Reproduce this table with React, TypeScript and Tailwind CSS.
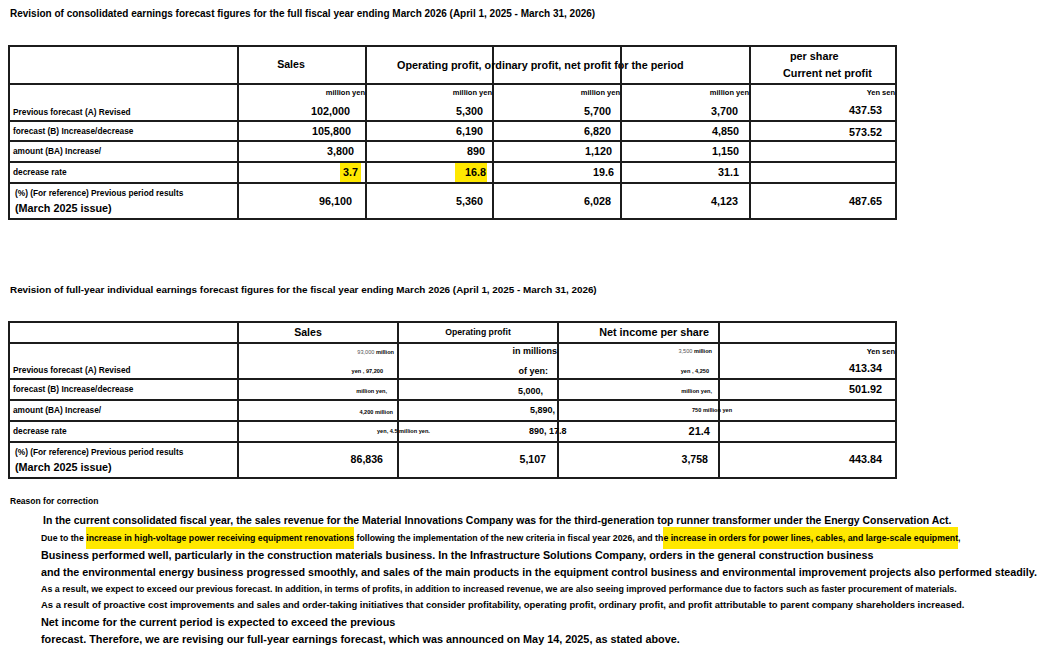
import React from "react";

type CellProps = { className?: string; children?: React.ReactNode };

// cells carry the right and bottom rule; the grid itself carries the top and left one
function Cell({ className = "", children }: CellProps) {
  return (
    <div className={"flex whitespace-nowrap border-r-2 border-b-2 border-[#1c1c1c] " + className}>
      {children}
    </div>
  );
}

function Label({ children }: { children: React.ReactNode }) {
  return <Cell className="items-center pl-[3px] text-[8.3px]">{children}</Cell>;
}

function Hl({ children, className = "" }: { children: React.ReactNode; className?: string }) {
  return <span className={"bg-[#ffe800] flex items-center " + className}>{children}</span>;
}

function ReferenceLabel() {
  return (
    <Cell className="flex-col justify-center pl-[5px]">
      <span className="text-[8.3px] leading-[14px]">(%) (For reference) Previous period results</span>
      <span className="text-[10.8px] leading-[16px]">(March 2025 issue)</span>
    </Cell>
  );
}

function ConsolidatedTable() {
  return (
    <div className="ml-[8px] mt-[25px] w-[889px] grid grid-cols-[229px_128px_127px_128px_129px_146px] grid-rows-[38px_37px_20px_21px_21px_36px] border-t-2 border-l-2 border-[#1c1c1c]">
      {/* header */}
      <Cell />
      <Cell className="items-center justify-center pr-[22px] text-[10.6px]">Sales</Cell>
      <Cell className="items-center pl-[30px] text-[10.8px]">Operating profit, ordinary profit, net profit for the period</Cell>
      <Cell />
      <Cell />
      <Cell className="flex-col justify-center text-[10.8px] leading-[17px]">
        <span className="pl-[39px]">per share</span>
        <span className="pl-[32px]">Current net profit</span>
      </Cell>

      {/* row 1 */}
      <Cell className="items-end pl-[3px] pb-[2px] text-[8.3px]">Previous forecast (A) Revised</Cell>
      <Cell className="flex-col items-end justify-between pt-[3px] pb-[2px]">
        <span className="text-[7.5px] leading-[9px]">million yen</span>
        <span className="text-[10.8px] leading-[13px] pr-[15px]">102,000</span>
      </Cell>
      <Cell className="flex-col items-end justify-between pt-[3px] pb-[2px]">
        <span className="text-[7.5px] leading-[9px]">million yen</span>
        <span className="text-[10.8px] leading-[13px] pr-[9px]">5,300</span>
      </Cell>
      <Cell className="flex-col items-end justify-between pt-[3px] pb-[2px]">
        <span className="text-[7.5px] leading-[9px]">million yen</span>
        <span className="text-[10.8px] leading-[13px] pr-[9px]">5,700</span>
      </Cell>
      <Cell className="flex-col items-end justify-between pt-[3px] pb-[2px]">
        <span className="text-[7.5px] leading-[9px]">million yen</span>
        <span className="text-[10.8px] leading-[13px] pr-[11px]">3,700</span>
      </Cell>
      <Cell className="flex-col items-end justify-between pt-[3px] pb-[3px]">
        <span className="text-[7.5px] leading-[9px]">Yen sen</span>
        <span className="text-[10.8px] leading-[13px] pr-[13px]">437.53</span>
      </Cell>

      {/* row 2 */}
      <Label>forecast (B) Increase/decrease</Label>
      <Cell className="items-center justify-end pr-[14px] text-[10.8px]">105,800</Cell>
      <Cell className="items-center justify-end pr-[9px] text-[10.8px]">6,190</Cell>
      <Cell className="items-center justify-end pr-[9px] text-[10.8px]">6,820</Cell>
      <Cell className="items-center justify-end pr-[10px] text-[10.8px]">4,850</Cell>
      <Cell className="items-start pt-[2px] justify-end pr-[13px] text-[10.8px]">573.52</Cell>

      {/* row 3 */}
      <Label>amount (BA) Increase/</Label>
      <Cell className="items-center justify-end pr-[11px] text-[10.8px]">3,800</Cell>
      <Cell className="items-center justify-end pr-[7px] text-[10.8px]">890</Cell>
      <Cell className="items-center justify-end pr-[8px] text-[10.8px]">1,120</Cell>
      <Cell className="items-center justify-end pr-[10px] text-[10.8px]">1,150</Cell>
      <Cell />

      {/* row 4 */}
      <Label>decrease rate</Label>
      <Cell className="justify-end pr-[4px] text-[10.8px]">
        <Hl className="px-[3px]">3.7</Hl>
      </Cell>
      <Cell className="justify-end pr-[5px] text-[10.8px]">
        <Hl className="pl-[10px] pr-[1px]">16.8</Hl>
      </Cell>
      <Cell className="items-center justify-end pr-[6px] text-[10.8px]">19.6</Cell>
      <Cell className="items-center justify-end pr-[10px] text-[10.8px]">31.1</Cell>
      <Cell />

      {/* row 5 */}
      <ReferenceLabel />
      <Cell className="items-center justify-end pr-[13px] text-[10.8px]">96,100</Cell>
      <Cell className="items-center justify-end pr-[9px] text-[10.8px]">5,360</Cell>
      <Cell className="items-center justify-end pr-[9px] text-[10.8px]">6,028</Cell>
      <Cell className="items-center justify-end pr-[11px] text-[10.8px]">4,123</Cell>
      <Cell className="items-center justify-end pr-[13px] text-[10.8px]">487.65</Cell>
    </div>
  );
}

function IndividualTable() {
  return (
    <div className="ml-[8px] mt-[25px] w-[889px] grid grid-cols-[229px_160px_160px_161px_177px] grid-rows-[21px_36px_21px_21px_21px_36px] border-t-2 border-l-2 border-[#1c1c1c]">
      {/* header */}
      <Cell />
      <Cell className="items-center justify-center pr-[20px] text-[10.6px]">Sales</Cell>
      <Cell className="items-center justify-center text-[8.7px]">Operating profit</Cell>
      <Cell className="items-center justify-end pr-[9px] text-[10.8px]">Net income per share</Cell>
      <Cell />

      {/* row 1 */}
      <Cell className="items-end pl-[3px] pb-[2px] text-[8.3px]">Previous forecast (A) Revised</Cell>
      <Cell className="flex-col items-end justify-between pt-[4px] pb-[3px] text-[5.6px] leading-[8px]">
        <span className="pr-[3px]"><span className="font-normal text-[#555]">93,000</span> million</span>
        <span className="pr-[14px]">yen , 97,200</span>
      </Cell>
      <Cell className="flex-col items-end justify-between pt-[1px] pb-[1px] text-[9px] leading-[12px]">
        <span>in millions</span>
        <span className="pr-[9px]">of yen:</span>
      </Cell>
      <Cell className="flex-col items-end justify-between pt-[3px] pb-[3px] text-[5.6px] leading-[8px]">
        <span className="pr-[6px]"><span className="font-normal text-[#555]">3,500</span> million</span>
        <span className="pr-[9px]">yen , 4,250</span>
      </Cell>
      <Cell className="flex-col items-end justify-between pt-[3px] pb-[3px]">
        <span className="text-[7.5px] leading-[9px]">Yen sen</span>
        <span className="text-[10.8px] leading-[13px] pr-[13px]">413.34</span>
      </Cell>

      {/* row 2 */}
      <Label>forecast (B) Increase/decrease</Label>
      <Cell className="items-center pt-[3px] justify-end pr-[10px] text-[5.6px]">million yen,</Cell>
      <Cell className="items-center pt-[4px] justify-end pr-[14px] text-[9px]">5,000,</Cell>
      <Cell className="items-center pt-[3px] justify-end pr-[6px] text-[5.6px]">million yen,</Cell>
      <Cell className="items-center justify-end pr-[13px] text-[10.8px]">501.92</Cell>

      {/* row 3 */}
      <Label>amount (BA) Increase/</Label>
      <Cell className="items-center pt-[3px] justify-end pr-[4px] text-[5.6px]">4,200 million</Cell>
      <Cell className="items-center pt-[1px] justify-end pr-[2px] text-[9px]">5,890,</Cell>
      <Cell className="items-center pl-[133px] text-[5.6px]">750 million yen</Cell>
      <Cell />

      {/* row 4 */}
      <Label>decrease rate</Label>
      <Cell className="items-center pl-[138px] text-[5.6px]">yen, 4.5 million yen.</Cell>
      <Cell className="items-center pl-[130px] text-[9px]">890, 17.8</Cell>
      <Cell className="items-center justify-end pr-[8px] text-[11px]">21.4</Cell>
      <Cell />

      {/* row 5 */}
      <ReferenceLabel />
      <Cell className="items-center justify-end pr-[14px] text-[10.6px]">86,836</Cell>
      <Cell className="items-center justify-end pr-[11px] text-[10.6px]">5,107</Cell>
      <Cell className="items-center justify-end pr-[10px] text-[10.6px]">3,758</Cell>
      <Cell className="items-center justify-end pr-[13px] pb-[2px] text-[10.8px]">443.84</Cell>
    </div>
  );
}

function Mark({ children }: { children: React.ReactNode }) {
  return <span className="bg-[#ffe800] py-[6px]">{children}</span>;
}

export default function App() {
  return (
    <div className="w-[1045px] h-[661px] overflow-hidden bg-white text-black font-bold font-['Liberation_Sans',Arial,sans-serif]">
      <div className="pt-[8px] pl-[10px] text-[10px] leading-[12px] whitespace-nowrap">
        Revision of consolidated earnings forecast figures for the full fiscal year ending March 2026 (April 1, 2025 - March 31, 2026)
      </div>
      <ConsolidatedTable />

      <div className="mt-[64px] pl-[10px] text-[9.9px] leading-[12px] whitespace-nowrap">
        Revision of full-year individual earnings forecast figures for the fiscal year ending March 2026 (April 1, 2025 - March 31, 2026)
      </div>
      <IndividualTable />

      <div className="mt-[16px] pl-[10px] text-[8.5px] leading-[12px]">Reason for correction</div>
      <div className="mt-[6px] whitespace-nowrap">
        <div className="h-[16.9px] leading-[16.9px] pl-[43px] text-[10.45px]">
          In the current consolidated fiscal year, the sales revenue for the Material Innovations Company was for the third-generation top runner transformer under the Energy Conservation Act.
        </div>
        <div className="h-[16.9px] leading-[16.9px] pl-[41px] text-[8.76px]">
          Due to the <Mark>increase in high-voltage power receiving equipment renovations</Mark> following the implementation of the new criteria in fiscal year 2026, and th<Mark>e increase in orders for power lines, cables, and large-scale equipment</Mark>,
        </div>
        <div className="h-[16.9px] leading-[16.9px] pl-[41px] text-[10.78px]">
          Business performed well, particularly in the construction materials business. In the Infrastructure Solutions Company, orders in the general construction business
        </div>
        <div className="h-[16.9px] leading-[16.9px] pl-[41px] text-[10.75px]">
          and the environmental energy business progressed smoothly, and sales of the main products in the equipment control business and environmental improvement projects also performed steadily.
        </div>
        <div className="h-[16.9px] leading-[16.9px] pl-[41px] text-[8.87px]">
          As a result, we expect to exceed our previous forecast. In addition, in terms of profits, in addition to increased revenue, we are also seeing improved performance due to factors such as faster procurement of materials.
        </div>
        <div className="h-[16.9px] leading-[16.9px] pl-[41px] text-[9.45px]">
          As a result of proactive cost improvements and sales and order-taking initiatives that consider profitability, operating profit, ordinary profit, and profit attributable to parent company shareholders increased.
        </div>
        <div className="h-[16.9px] leading-[16.9px] pl-[41px] text-[10.85px]">
          Net income for the current period is expected to exceed the previous
        </div>
        <div className="h-[16.9px] leading-[16.9px] pl-[41px] text-[10.85px]">
          forecast. Therefore, we are revising our full-year earnings forecast, which was announced on May 14, 2025, as stated above.
        </div>
      </div>
    </div>
  );
}
